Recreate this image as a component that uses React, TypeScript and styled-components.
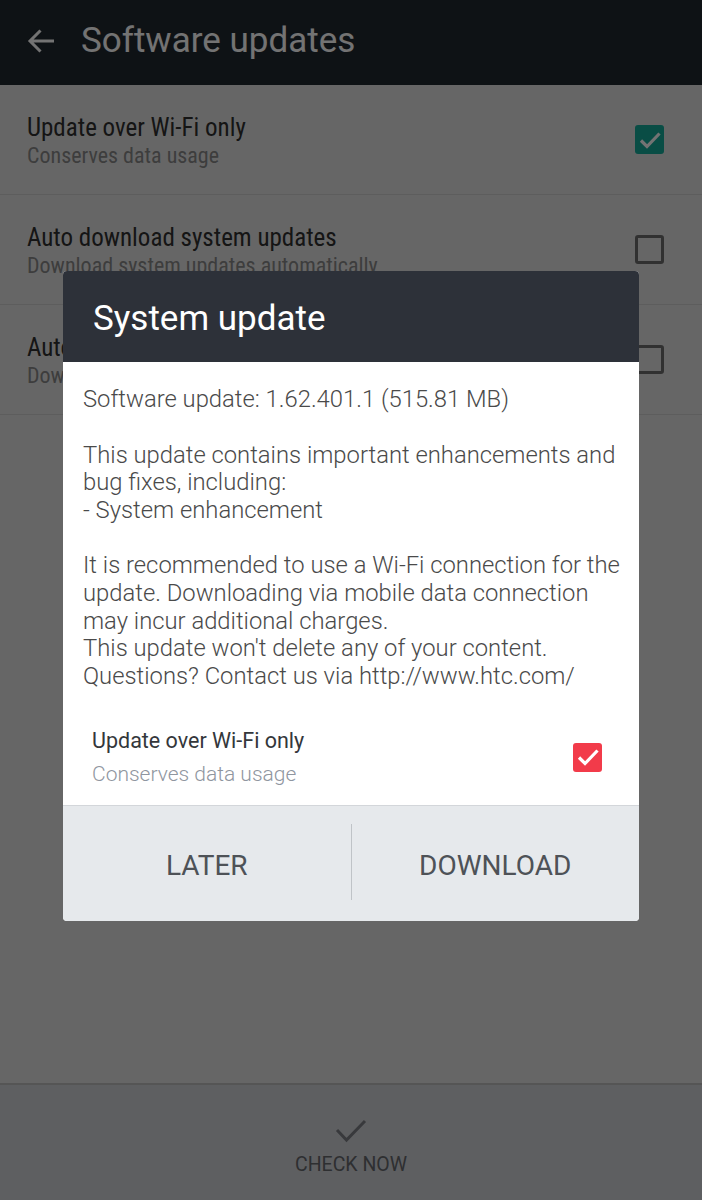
import React from "react";
import styled, { createGlobalStyle } from "styled-components";

const Global = createGlobalStyle`
  html, body { margin: 0; padding: 0; background: #666666; }
  body { font-family: Roboto, "Noto Sans", "Liberation Sans", sans-serif; -webkit-font-smoothing: antialiased; }
  * { box-sizing: border-box; }
`;

const Screen = styled.div`
  position: relative;
  width: 702px;
  height: 1200px;
  display: flex;
  flex-direction: column;
  background: #e3e3e3;
  overflow: hidden;
`;

const AppBar = styled.header`
  height: 85px;
  flex: none;
  display: flex;
  align-items: center;
  gap: 26px;
  padding: 0 0 4px 27px;
  background: #21282f;
  color: #ffffff;
`;

const AppTitle = styled.h1`
  margin: 0;
  font-size: 35px;
  font-weight: 400;
  line-height: 40px;
`;

const SettingsList = styled.div`
  display: flex;
  flex-direction: column;
`;

const SettingRow = styled.div`
  height: 110px;
  display: flex;
  align-items: center;
  justify-content: space-between;
  padding: 0 38px 0 27px;
  border-bottom: 1px solid #cfcfcf;
`;

const RowText = styled.div`
  display: flex;
  flex-direction: column;
  padding-top: 5px;
`;

const RowTitle = styled.div`
  font-family: "Roboto Condensed", Roboto, sans-serif;
  font-size: 25px;
  line-height: 28px;
  color: #2f2f2f;
`;

const RowSub = styled.div`
  font-family: "Roboto Condensed", Roboto, sans-serif;
  font-size: 22px;
  line-height: 28px;
  color: #888888;
  white-space: nowrap;
`;

const Box = styled.div<{ $on?: boolean; $color?: string }>`
  width: 29px;
  height: 29px;
  flex: none;
  border-radius: 3px;
  display: flex;
  align-items: center;
  justify-content: center;
  background: ${(p) => (p.$on ? p.$color : "transparent")};
  border: ${(p) => (p.$on ? "none" : "3px solid #6e6e6e")};
`;

const Filler = styled.div`
  flex: 1;
`;

const BottomBar = styled.div`
  height: 117px;
  flex: none;
  display: flex;
  flex-direction: column;
  align-items: center;
  padding-top: 34px;
  gap: 10px;
  background: #d1d3d8;
  border-top: 2px solid #bcbcbc;
`;

const CheckNowLabel = styled.div`
  font-size: 19.5px;
  line-height: 24px;
  color: #67696e;
`;

const Scrim = styled.div`
  position: absolute;
  inset: 0;
  background: rgba(0, 0, 0, 0.55);
  display: flex;
  align-items: center;
  justify-content: center;
  padding-bottom: 8px;
`;

const Dialog = styled.div`
  width: 576px;
  border-radius: 4px;
  overflow: hidden;
  background: #ffffff;
  display: flex;
  flex-direction: column;
`;

const DialogHeader = styled.div`
  height: 91px;
  display: flex;
  align-items: center;
  padding: 3px 30px 0;
  background: #2d3139;
`;

const DialogTitle = styled.h2`
  margin: 0;
  font-size: 35px;
  font-weight: 400;
  color: #ffffff;
`;

const DialogBody = styled.div`
  padding: 24px 15px 0 20px;
  font-size: 23.8px;
  font-weight: 300;
  line-height: 27.7px;
  color: #4a4a4a;
`;

const Para = styled.p`
  margin: 0 0 27.7px;
  &:last-child { margin-bottom: 0; }
`;

const OptionRow = styled.div`
  display: flex;
  align-items: center;
  justify-content: space-between;
  padding: 35px 37px 16px 29px;
  border-bottom: 1px solid #d3d6da;
`;

const OptionTitle = styled.div`
  font-size: 21.5px;
  line-height: 30px;
  color: #34373b;
`;

const OptionSub = styled.div`
  margin-top: 3px;
  font-size: 21px;
  font-weight: 300;
  line-height: 30px;
  color: #8f96a0;
`;

const ButtonBar = styled.div`
  height: 115px;
  display: grid;
  grid-template-columns: 1fr 1px 1fr;
  align-items: center;
  background: #e6e9ec;
`;

const DialogButton = styled.button`
  height: 100%;
  border: none;
  background: transparent;
  font-family: inherit;
  font-size: 28px;
  color: #4e5257;
  padding: 5px 0 0 0;
`;

const VDivider = styled.div`
  height: 76px;
  background: #bfc3c7;
  margin-top: -2px;
`;

const BackArrow = () => (
  <svg width="28" height="26" viewBox="0 0 28 26" fill="none">
    <path d="M27 13H3M13.5 2.5L3 13l10.5 10.5" stroke="currentColor" strokeWidth="3" />
  </svg>
);

const Tick = ({ color }: { color: string }) => (
  <svg width="24" height="24" viewBox="0 0 24 24" fill="none">
    <path d="M3 12.5l6 6L21.5 5.5" stroke={color} strokeWidth="3.2" />
  </svg>
);

const ThinCheck = () => (
  <svg width="32" height="24" viewBox="0 0 32 24" fill="none">
    <path d="M2 11l9.5 10L30 2" stroke="#7d7f85" strokeWidth="3" />
  </svg>
);

const settings = [
  { title: "Update over Wi-Fi only", sub: "Conserves data usage", on: true },
  { title: "Auto download system updates", sub: "Download system updates automatically", on: false },
  { title: "Auto update apps", sub: "Download app updates automatically", on: false },
];

export default function App() {
  return (
    <>
      <Global />
      <Screen>
        <AppBar>
          <BackArrow />
          <AppTitle>Software updates</AppTitle>
        </AppBar>
        <SettingsList>
          {settings.map((s) => (
            <SettingRow key={s.title}>
              <RowText>
                <RowTitle>{s.title}</RowTitle>
                <RowSub>{s.sub}</RowSub>
              </RowText>
              <Box $on={s.on} $color="#16ab99">
                {s.on && <Tick color="#ffffff" />}
              </Box>
            </SettingRow>
          ))}
        </SettingsList>
        <Filler />
        <BottomBar>
          <ThinCheck />
          <CheckNowLabel>CHECK NOW</CheckNowLabel>
        </BottomBar>

        <Scrim>
          <Dialog>
            <DialogHeader>
              <DialogTitle>System update</DialogTitle>
            </DialogHeader>
            <DialogBody>
              <Para>Software update: 1.62.401.1 (515.81 MB)</Para>
              <Para>
                This update contains important enhancements and bug fixes, including:
                <br />- System enhancement
              </Para>
              <Para>
                It is recommended to use a Wi-Fi connection for the update. Downloading via mobile data
                connection may incur additional charges.
                <br />
                This update won't delete any of your content.
                <br />
                Questions? Contact us via http://www.htc.com/
              </Para>
            </DialogBody>
            <OptionRow>
              <div>
                <OptionTitle>Update over Wi-Fi only</OptionTitle>
                <OptionSub>Conserves data usage</OptionSub>
              </div>
              <Box $on $color="#f23b4a">
                <Tick color="#ffffff" />
              </Box>
            </OptionRow>
            <ButtonBar>
              <DialogButton>LATER</DialogButton>
              <VDivider />
              <DialogButton>DOWNLOAD</DialogButton>
            </ButtonBar>
          </Dialog>
        </Scrim>
      </Screen>
    </>
  );
}
